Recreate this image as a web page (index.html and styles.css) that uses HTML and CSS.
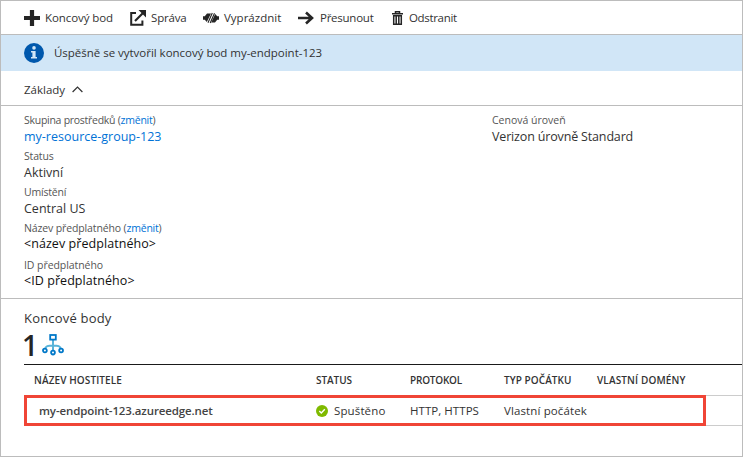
FILE: index.html
```html
<!DOCTYPE html>
<html lang="cs">
<head>
<meta charset="utf-8">
<title>my-endpoint-123</title>
<link rel="stylesheet" href="styles.css">
</head>
<body>
<main class="blade">
  <nav class="toolbar">
    <a class="cmd cmd-add"><svg width="16" height="16" viewBox="0 0 16 16"><path d="M0 8H16M8 0V16" stroke="#252525" stroke-width="4.200" fill="none"/></svg><span>Koncový bod</span></a>
    <a class="cmd cmd-manage"><svg width="16" height="16" viewBox="0 0 16 16"><path d="M6 3H1.2V14.8H12.4V10.500" stroke="#252525" stroke-width="2" fill="none"/><path d="M5 11L13.500 2.500" stroke="#252525" stroke-width="2.200" fill="none"/><path d="M8.500 0H16V7.500Z" fill="#252525"/></svg><span>Správa</span></a>
    <a class="cmd cmd-purge"><svg width="16" height="12" viewBox="0 0 16 12"><path d="M0 4.300H1.800L4 1.500H8L3.800 10L1.800 7.700H0ZM12.200 2L14.200 4.300H16V7.700H14.200L12 10.500H8.200Z" fill="#252525"/><path d="M5 10.800L9.300 1M7.200 11L11.500 1.200" stroke="#252525" stroke-width="1.100"/></svg><span>Vyprázdnit</span></a>
    <a class="cmd cmd-move"><svg width="16" height="14" viewBox="0 0 16 14"><path d="M0 7H14M8 1.5L14 7L8 12.5" stroke="#252525" stroke-width="2.6" fill="none"/></svg><span>Přesunout</span></a>
    <a class="cmd cmd-delete"><svg width="11" height="14" viewBox="0 0 11 14"><path d="M0 2.700H11M3.500 2.500V0.700H7.500V2.500" stroke="#252525" stroke-width="1.500" fill="none"/><path d="M1.700 4.700H9.300V13.200H1.700ZM4.200 5V12.500M6.800 5V12.500" stroke="#252525" stroke-width="1.500" fill="none"/></svg><span>Odstranit</span></a>
  </nav>

  <div class="notice">
    <svg width="20" height="20" viewBox="0 0 20 20"><circle cx="10" cy="10" r="10" fill="#0058ad"/><circle cx="10" cy="4.9" r="1.8" fill="#d1e6f7"/><path d="M7 8H11.6V14H13V15.6H7V14H8.4V9.6H7Z" fill="#d1e6f7"/></svg>
    <span>Úspěšně se vytvořil koncový bod my-endpoint-123</span>
  </div>

  <div class="essentials-bar">
    <span>Základy</span>
    <svg width="11" height="7" viewBox="0 0 11 7"><path d="M0.6 6L5.5 1L10.4 6" stroke="#333" stroke-width="1.2" fill="none"/></svg>
  </div>

  <section class="essentials">
    <dl class="props">
      <div><dt><span class="k-group">Skupina prostředků (</span><a class="change">změnit</a>)</dt><dd><a>my-resource-group-123</a></dd></div>
      <div><dt class="k-status">Status</dt><dd>Aktivní</dd></div>
      <div><dt class="k-place">Umístění</dt><dd>Central US</dd></div>
      <div><dt class="k-name">Název předplatného (<a class="change">změnit</a>)</dt><dd class="placeholder raised">&lt;název předplatného&gt;</dd></div>
      <div class="last"><dt class="k-id">ID předplatného</dt><dd class="placeholder raised">&lt;ID předplatného&gt;</dd></div>
    </dl>
    <dl class="props">
      <div><dt>Cenová úroveň</dt><dd class="tier">Verizon úrovně Standard</dd></div>
    </dl>
  </section>

  <section class="endpoints">
    <h2>Koncové body</h2>
    <div class="count">
      <span>1</span>
      <svg width="22" height="22" viewBox="0 0 22 22" fill="none"><path d="M11 5V17M3 15.5C3.5 12 6 11.5 11 11.5S18.5 12 19 15.5" stroke="#59b4d9" stroke-width="2"/><g stroke="#0078c8" stroke-width="1.8" fill="#fff"><rect x="8.2" y="1" width="5.6" height="4.6"/><circle cx="2.9" cy="16.5" r="1.9"/><circle cx="11" cy="18.6" r="1.9"/><circle cx="19.1" cy="16.5" r="1.9"/></g></svg>
    </div>
    <div class="grid">
      <div class="row head">
        <span class="h-name">Název hostitele</span><span class="h-status">Status</span><span class="h-proto">Protokol</span><span class="h-type">Typ počátku</span><span class="h-domain">Vlastní domény</span>
      </div>
      <div class="row item">
        <span class="host">my-endpoint-123.azureedge.net</span>
        <span class="state"><svg width="12" height="12" viewBox="0 0 12 12"><circle cx="6" cy="6" r="6" fill="#7fba00"/><path d="M3.3 6L5.3 8L8.8 4.2" stroke="#fff" stroke-width="1.4" fill="none"/></svg>Spuštěno</span>
        <span class="proto">HTTP, HTTPS</span>
        <span class="type">Vlastní počátek</span>
        <span></span>
        <div class="highlight"></div>
      </div>
    </div>
  </section>
</main>
</body>
</html>
```
FILE: styles.css
```css
* { box-sizing: border-box; }

body {
  margin: 0;
  background: #fff;
  color: #333;
  font: 11.5px/16px "Open Sans", sans-serif;
}

.blade {
  width: 743px;
  height: 457px;
  border: 1px solid #bcbcbc;
  overflow: hidden;
}

svg { display: block; flex: none; }
span { white-space: nowrap; }
a { color: #0072d6; }

.toolbar {
  display: flex;
  height: 34px;
  padding-left: 23px;
  border-bottom: 1px solid #bcbcbc;
}
.cmd {
  display: flex;
  align-items: center;
  gap: 5px;
  color: #333;
}
.cmd-add { width: 106px; letter-spacing: -0.08px; }
.cmd-manage { width: 73px; letter-spacing: -0.18px; }
.cmd-purge { width: 95px; }
.cmd-move { width: 94px; gap: 6px; letter-spacing: -0.25px; }
.cmd-delete { letter-spacing: -0.33px; gap: 6px; }

.notice {
  display: flex;
  align-items: center;
  gap: 10px;
  height: 36px;
  padding-left: 23px;
  background: #d1e6f7;
  letter-spacing: -0.02px;
}

.essentials-bar {
  display: flex;
  align-items: center;
  gap: 7px;
  height: 35px;
  padding: 3px 0 0 23px;
  border-bottom: 1px solid #bcbcbc;
}

.essentials {
  display: grid;
  grid-template-columns: 468px 1fr;
  height: 193px;
  padding: 6px 0 0 23px;
  border-bottom: 1px solid #bcbcbc;
}
.props { margin: 0; }
.props > div { height: 36px; }
.props > .last { padding-top: 1px; }
.props dt {
  font-size: 10.5px;
  line-height: 16px;
  color: #555;
}
.props dd {
  margin: 0;
  font-size: 12.5px;
  line-height: 18px;
}
.props .raised { margin-top: -1px; }
.props .placeholder { color: #111; letter-spacing: 0.06px; }
.props .tier { letter-spacing: -0.16px; }
.k-group { letter-spacing: -0.27px; }
.change { letter-spacing: -0.23px; }
.k-status { letter-spacing: -0.17px; }
.k-place { letter-spacing: -0.2px; }
.k-name { letter-spacing: -0.13px; }
.k-id { letter-spacing: -0.07px; }

.endpoints { padding: 10px 0 0 23px; }
.endpoints h2 {
  margin: 0;
  font-size: 13px;
  font-weight: 400;
  line-height: 18px;
  letter-spacing: 0.19px;
}
.count {
  display: flex;
  align-items: center;
  gap: 4px;
  height: 37px;
  padding-bottom: 2px;
}
.count span {
  width: 15px;
  margin-left: -2px;
  font-size: 28px;
  font-weight: 600;
  line-height: 32px;
  color: #252525;
}
.count svg { margin-left: 1px; }

.grid { border-top: 1px solid #1a1a1a; }
.row {
  display: grid;
  grid-template-columns: 282px 94px 94px 93px 1fr;
  align-items: center;
  padding-left: 10px;
}
.head {
  height: 31px;
  border-bottom: 1px solid #ccc;
  font-size: 10px;
  font-weight: 600;
  text-transform: uppercase;
}
.item {
  position: relative;
  height: 30px;
  border-bottom: 1px solid #ccc;
}
.h-name { letter-spacing: 0.1px; }
.h-status { letter-spacing: -0.06px; }
.h-proto { letter-spacing: -0.2px; }
.h-type { letter-spacing: 0.07px; }
.h-domain { letter-spacing: 0.13px; }
.host { padding-left: 5px; font-weight: 600; letter-spacing: -0.12px; color: #444; }
.state { display: flex; align-items: center; gap: 6px; letter-spacing: 0.13px; }
.proto { letter-spacing: 0.05px; }
.type { letter-spacing: 0.12px; }
.highlight {
  position: absolute;
  top: -1px;
  left: 0;
  width: 682px;
  height: 31px;
  border: 3px solid #f04536;
}
```
